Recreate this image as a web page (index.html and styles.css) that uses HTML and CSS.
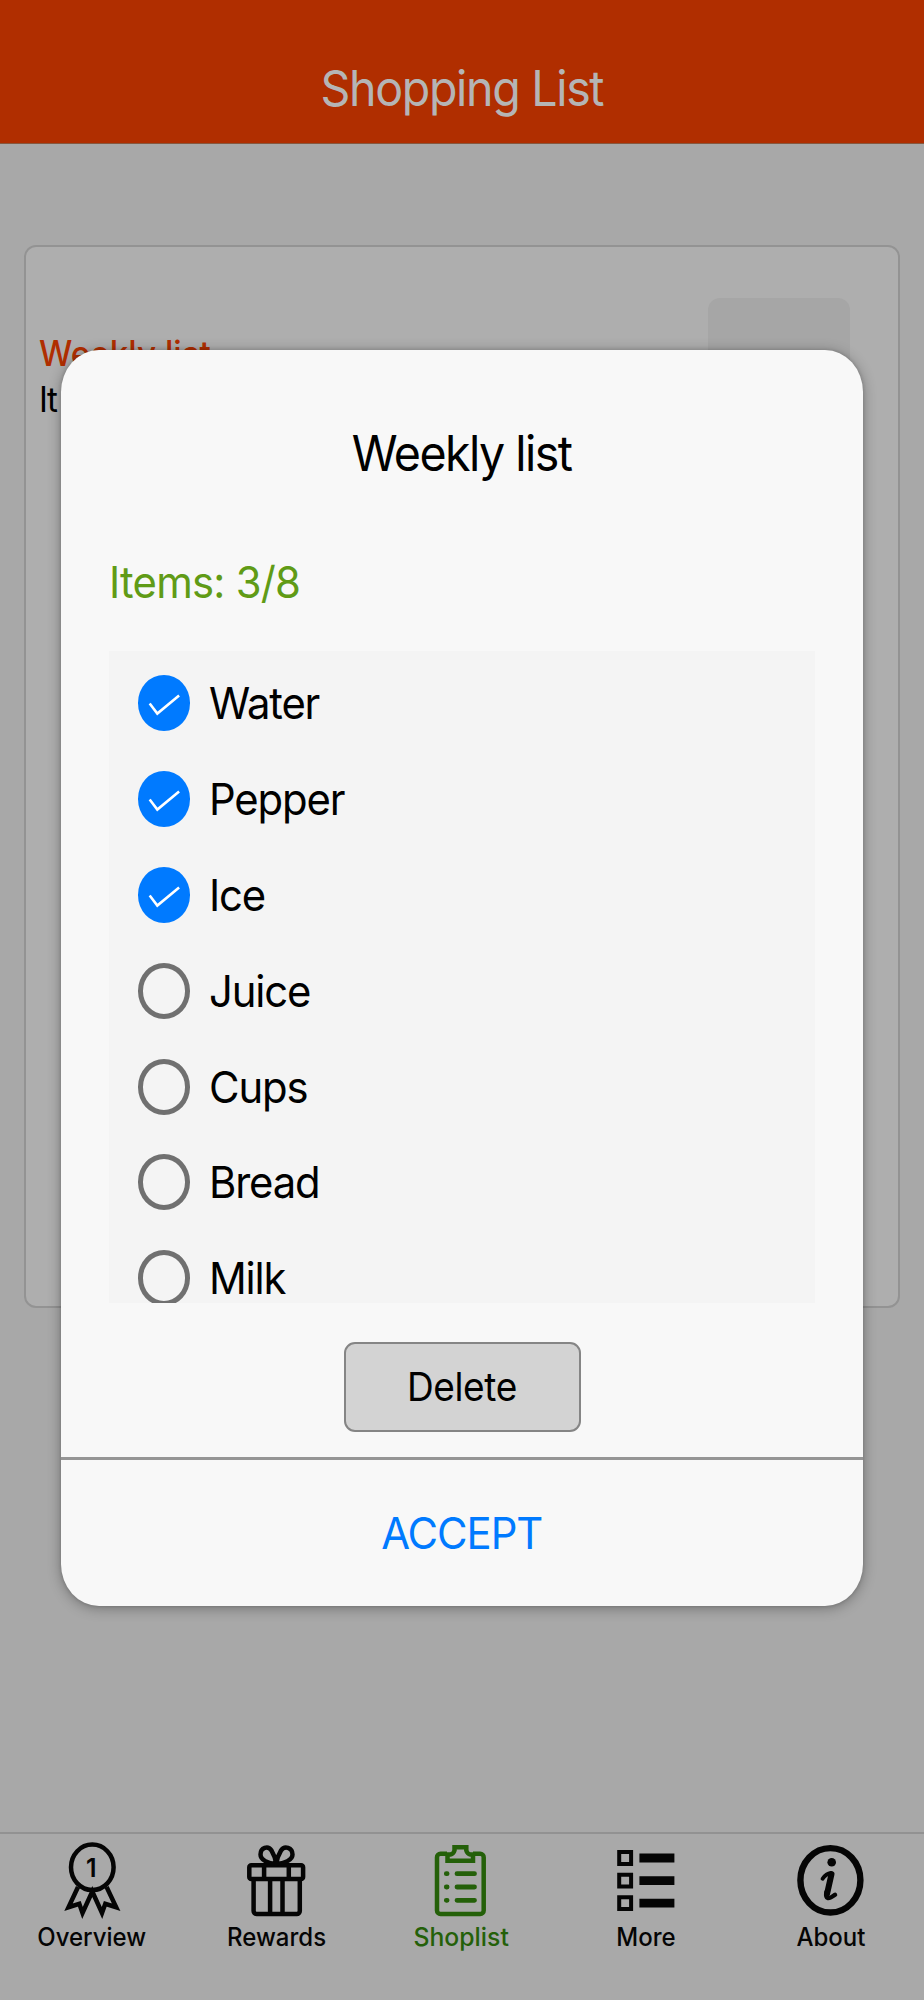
FILE: index.html
```html
<!DOCTYPE html>
<html lang="en">
<head>
<meta charset="utf-8">
<title>Shopping List</title>
<link rel="stylesheet" href="styles.css">
</head>
<body>
<div class="screen">
  <header class="header"><h1 class="header-title">Shopping List</h1></header>
  <main class="content">
    <section class="card">
      <div class="card-text">
        <div class="card-title">Weekly list</div>
        <div class="card-sub">It</div>
      </div>
      <div class="card-button"></div>
    </section>
  </main>
  <nav class="tabs">
    <a class="tab">
      <svg class="icon" viewBox="0 0 80 80" fill="none" stroke="currentColor" stroke-width="4.500">
        <ellipse cx="40.300" cy="27.300" rx="21.300" ry="22.700"/>
        <path d="M26 47 16.500 67.200 27.300 63.800 30.500 73 40.300 51.500 50 73 53.300 63.800 64.200 67.200 54.600 47"/>
        <text class="medal-number" x="39.400" y="37.400">1</text>
      </svg>
      <span class="label">Overview</span>
    </a>
    <a class="tab">
      <svg class="icon" viewBox="0 0 80 80" fill="none" stroke="currentColor" stroke-width="4.500">
        <rect x="12.300" y="25.300" width="53.800" height="13.600" rx="2"/>
        <path d="M27.100 25v14M51.800 25v14M16.600 39v32a3 3 0 0 0 3 3h40.200a3 3 0 0 0 3-3V39M33.100 39v35M45.500 39v35"/>
        <path d="M39.200 24C31 23.500 23.500 20 23.500 14.500C23.500 7.500 31 5 34.500 10.500C37 14.500 38.500 19 39.200 24C40 19 41.500 14.500 44 10.500C47.500 5 55.500 7.500 55.500 14.500C55.500 20 47.500 23.500 39.200 24Z"/>
      </svg>
      <span class="label">Rewards</span>
    </a>
    <a class="tab active">
      <svg class="icon" viewBox="0 0 80 80" fill="none" stroke="currentColor" stroke-width="4.500">
        <path d="M26 13.800H19.500a3.500 3.500 0 0 0-3.500 3.500V70.500a3.500 3.500 0 0 0 3.500 3.500H59.200a3.500 3.500 0 0 0 3.500-3.500V17.300a3.500 3.500 0 0 0-3.500-3.500H52"/>
        <path d="M26.500 20.800V14.500H29.500Q32.500 14 33.500 10.500V7.300H45.300V10.500Q46.300 14 49.300 14.500H52V20.800Z"/>
        <g stroke-width="4.800" stroke-linecap="round"><path d="M25.300 33.700h.8M25.300 47h.8M25.300 60.300h.8M36 33.700h17.500M36 47h17.500M36 60.300h17.500"/></g>
      </svg>
      <span class="label label-wide">Shoplist</span>
    </a>
    <a class="tab">
      <svg class="icon" viewBox="0 0 80 80" fill="none" stroke="currentColor">
        <path stroke-width="4" d="M13.200 12h11.900v11.900H13.200zM13.200 34.700h11.900v11.900H13.200zM13.200 57.200h11.900v11.900H13.200z"/>
        <path stroke-width="8.800" d="M33.400 18h35M33.400 40.700h35M33.400 63.200h35"/>
      </svg>
      <span class="label">More</span>
    </a>
    <a class="tab">
      <svg class="icon" viewBox="0 0 80 80" fill="none" stroke="currentColor">
        <ellipse cx="39.400" cy="40.300" rx="30" ry="32.200" stroke-width="6.400"/>
        <circle cx="40.700" cy="22.300" r="4.300" fill="currentColor" stroke="none"/>
        <path stroke-width="3.800" stroke-linecap="round" d="M31.500 38.800Q35 33.800 40 33"/>
        <path stroke-width="6" stroke-linecap="round" stroke-linejoin="round" d="M40.500 34.200 36 54"/>
        <path stroke-width="4.500" stroke-linecap="round" stroke-linejoin="round" d="M35.500 52Q33.500 62.500 44 54.800"/>
      </svg>
      <span class="label">About</span>
    </a>
  </nav>

  <div class="dialog" role="dialog">
    <h2 class="dialog-title"><span>Weekly list</span></h2>
    <div class="count"><span>Items: 3/8</span></div>
    <ul class="items">
      <li class="item"><svg class="check on" viewBox="0 0 53 56"><path d="M11.800 28.500 19.500 38.700 41.500 20.500"/></svg><span>Water</span></li>
      <li class="item"><svg class="check on" viewBox="0 0 53 56"><path d="M11.800 28.500 19.500 38.700 41.500 20.500"/></svg><span>Pepper</span></li>
      <li class="item"><svg class="check on" viewBox="0 0 53 56"><path d="M11.800 28.500 19.500 38.700 41.500 20.500"/></svg><span>Ice</span></li>
      <li class="item"><i class="check"></i><span>Juice</span></li>
      <li class="item"><i class="check"></i><span>Cups</span></li>
      <li class="item"><i class="check"></i><span>Bread</span></li>
      <li class="item"><i class="check"></i><span>Milk</span></li>
    </ul>
    <button class="delete"><span>Delete</span></button>
    <button class="accept"><span>ACCEPT</span></button>
  </div>
</div>
</body>
</html>
```
FILE: styles.css
```css
* { box-sizing: border-box; }
body { margin: 0; font-family: Inter, "Liberation Sans", sans-serif; color: #000; }
h1, h2, ul { margin: 0; padding: 0; font-weight: 400; }
button { font: inherit; }
.screen { position: relative; width: 924px; height: 2000px; display: flex; flex-direction: column; background: #a8a8a8; overflow: hidden; }

.header { height: 144px; padding-top: 59px; display: flex; justify-content: center; background: #b02e00; border-bottom: 1px solid #86583f; }
.header-title { font-size: 49px; line-height: 60px; letter-spacing: -1.4px; color: #b5b5b5; transform: scaleX(.95); white-space: nowrap; }

.content { flex: 1; padding: 101px 24px 0; }
.card { height: 1063px; display: flex; justify-content: space-between; background: #aeaeae; border: 2px solid #939393; border-radius: 12px; padding: 51px 48px 0 13px; }
.card-text { padding-top: 32px; }
.card-title, .card-sub { font-size: 35px; line-height: 46px; white-space: nowrap; transform: scaleX(.95); transform-origin: left; }
.card-title { color: #b02e00; font-weight: 500; }
.card-sub { letter-spacing: -1.5px; }
.card-button { width: 142px; height: 90px; border-radius: 12px; background: #a6a6a6; }

.tabs { height: 168px; display: flex; border-top: 2px solid #929292; background: #a9a9a9; }
.tab { flex: 1; display: flex; flex-direction: column; align-items: center; padding: 6px 1px 0 0; color: #050505; }
.tab.active { color: #246009; }
.icon { width: 80px; height: 80px; flex: none; }
.medal-number { font: 600 25px Inter, sans-serif; fill: currentColor; stroke: none; text-anchor: middle; }
.label { font-size: 25px; line-height: 35px; font-weight: 500; white-space: nowrap; transform: scaleX(.96); }
.label-wide { transform: scaleX(.99); }

.dialog { position: absolute; left: 61px; top: 350px; width: 802px; height: 1256px; display: flex; flex-direction: column; background: #f8f8f8; border-radius: 38px / 42px; box-shadow: 0 2px 14px rgba(0,0,0,.32), 0 0 3px 1px rgba(0,0,0,.1); overflow: hidden; }
.dialog span { display: inline-block; white-space: nowrap; }
.dialog-title { height: 60px; margin-top: 74px; font-size: 49px; line-height: 60px; letter-spacing: -1.6px; text-align: center; }
.dialog-title span { transform: scaleX(.95); }
.count { height: 54px; margin: 71px 0 0 48px; font-size: 44px; line-height: 54px; letter-spacing: -.8px; color: #609b16; }
.count span { transform: scaleX(.95); transform-origin: left; }
.items { height: 652px; margin: 42px 48px 0; padding: 4.5px 0 0 28.5px; background: #f4f4f4; overflow: hidden; list-style: none; }
.item { height: 95.8px; display: flex; align-items: center; gap: 18.5px; font-size: 44px; line-height: 46px; letter-spacing: -1.2px; }
.item span { transform: scaleX(.95); transform-origin: left; }
.check { width: 52.5px; height: 56px; flex: none; border: 5px solid #707070; border-radius: 50%; }
.check.on { border: 0; background: #007aff; }
.check path { fill: none; stroke: #fff; stroke-width: 2.6; }
.delete { width: 237px; height: 90px; margin: 39px auto 0; padding: 0; flex: none; border: 2px solid #858585; border-radius: 11px; background: #d3d3d3; font-size: 39px; line-height: 60px; letter-spacing: -.4px; color: #000; }
.delete span { transform: scaleX(.95); }
.accept { height: 149px; margin-top: 25px; padding: 0; flex: none; border: 0; border-top: 3px solid #959595; background: none; font-size: 44px; line-height: 60px; letter-spacing: -1.1px; color: #007aff; }
.accept span { transform: scaleX(.95); }
```
